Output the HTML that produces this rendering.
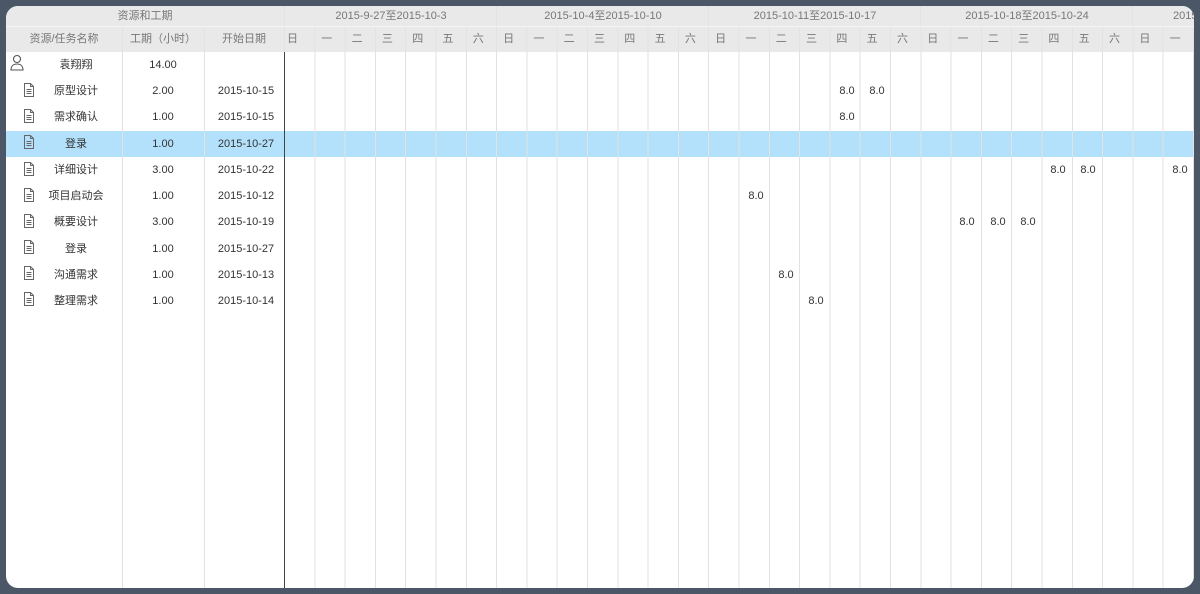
<!DOCTYPE html>
<html><head><meta charset="utf-8"><style>
*{margin:0;padding:0;box-sizing:border-box}
body{width:1200px;height:594px;background:#4b5667;overflow:hidden;font-family:"Liberation Sans","Noto Sans CJK SC",sans-serif;font-size:11px}
#f{position:absolute;left:6px;top:6px;width:1188px;height:582px;background:#fff;border-radius:12px;overflow:hidden}
.a{position:absolute}
.hd{position:absolute;left:0;top:0;width:1188px;height:46px;background:#e9e9e9}
.t{position:absolute;text-align:center;white-space:nowrap;color:#333;line-height:26px}
.h{color:#777;line-height:20px}
.vl{position:absolute;top:0;width:1px;height:582px;background:#e2e2e2}
#days span{flex:0 0 30.3px;padding-left:6px;line-height:26px}
</style></head><body>
<div id="f">
<div class="hd"></div>
<div class="a" style="left:0;top:125px;width:1188px;height:26px;background:#b3e0fb"></div>
<div class="a" style="left:279px;top:0;width:909px;height:582px;background:repeating-linear-gradient(to right,transparent 0 29.3px,#e2e2e2 29.3px 30.3px)"></div>
<div class="a" style="left:279px;top:0;width:909px;height:20px;background:#e9e9e9"></div>
<div class="vl" style="left:116px;top:20px"></div>
<div class="vl" style="left:198px;top:20px"></div>
<div class="vl" style="left:278px"></div>
<div class="vl" style="left:490px;height:20px"></div>
<div class="vl" style="left:702px;height:20px"></div>
<div class="vl" style="left:914px;height:20px"></div>
<div class="vl" style="left:1126px;height:20px"></div>
<div class="a" style="left:278px;top:46px;width:1px;height:536px;background:#444"></div>
<div class="a" style="left:0;top:20px;width:1188px;height:1px;background:#f4f4f4"></div>

<div class="t h" style="left:0;top:0;width:278px">资源和工期</div>
<div class="t h" style="left:279px;top:0;width:212px">2015-9-27至2015-10-3</div>
<div class="t h" style="left:491px;top:0;width:212px">2015-10-4至2015-10-10</div>
<div class="t h" style="left:703px;top:0;width:212px">2015-10-11至2015-10-17</div>
<div class="t h" style="left:915px;top:0;width:212px">2015-10-18至2015-10-24</div>
<div class="t h" style="left:1167px;top:0;width:100px;text-align:left">2015-10-25至2015-10-31</div>

<div class="t h" style="left:0;top:20px;width:116px;line-height:26px">资源/任务名称</div>
<div class="t h" style="left:116px;top:20px;width:82px;line-height:26px">工期（小时）</div>
<div class="t h" style="left:198px;top:20px;width:80px;line-height:26px">开始日期</div>
<div class="a" id="days" style="left:279px;top:20px;width:909px;height:26px;display:flex;color:#777">
<span style="padding-left:2px">日</span><span>一</span><span>二</span><span>三</span><span>四</span><span>五</span><span>六</span>
<span>日</span><span>一</span><span>二</span><span>三</span><span>四</span><span>五</span><span>六</span>
<span>日</span><span>一</span><span>二</span><span>三</span><span>四</span><span>五</span><span>六</span>
<span>日</span><span>一</span><span>二</span><span>三</span><span>四</span><span>五</span><span>六</span>
<span>日</span><span>一</span>
</div>

<svg class="a" style="left:3px;top:48px" width="16" height="18" viewBox="0 0 16 18" fill="none" stroke="#555" stroke-width="1.1"><circle cx="8" cy="5" r="3.5"/><path d="M2 16c0-4 2.5-6 6-6s6 2 6 6z"/></svg>
<div class="t" style="left:0;top:46px;width:140px">袁翔翔</div>
<div class="t" style="left:116px;top:46px;width:82px">14.00</div>

<svg width="0" height="0" style="position:absolute"><defs><g id="d"><path d="M1.5 0.5h6l3 3v10h-9z" fill="none" stroke="#666" stroke-width="1"/><path d="M7.5 0.5v3h3M3.5 6.5h5M3.5 8.5h5M3.5 10.5h5" stroke="#666" stroke-width="1" fill="none"/></g></defs></svg>
<svg class="a" style="left:17px;top:77px" width="12" height="15"><use href="#d"/></svg>
<svg class="a" style="left:17px;top:103px" width="12" height="15"><use href="#d"/></svg>
<svg class="a" style="left:17px;top:129px" width="12" height="15"><use href="#d"/></svg>
<svg class="a" style="left:17px;top:156px" width="12" height="15"><use href="#d"/></svg>
<svg class="a" style="left:17px;top:182px" width="12" height="15"><use href="#d"/></svg>
<svg class="a" style="left:17px;top:208px" width="12" height="15"><use href="#d"/></svg>
<svg class="a" style="left:17px;top:234px" width="12" height="15"><use href="#d"/></svg>
<svg class="a" style="left:17px;top:260px" width="12" height="15"><use href="#d"/></svg>
<svg class="a" style="left:17px;top:286px" width="12" height="15"><use href="#d"/></svg>

<div class="t" style="left:30px;top:72px;width:80px">原型设计</div>
<div class="t" style="left:30px;top:98px;width:80px">需求确认</div>
<div class="t" style="left:30px;top:125px;width:80px">登录</div>
<div class="t" style="left:30px;top:151px;width:80px">详细设计</div>
<div class="t" style="left:30px;top:177px;width:80px">项目启动会</div>
<div class="t" style="left:30px;top:203px;width:80px">概要设计</div>
<div class="t" style="left:30px;top:230px;width:80px">登录</div>
<div class="t" style="left:30px;top:256px;width:80px">沟通需求</div>
<div class="t" style="left:30px;top:282px;width:80px">整理需求</div>

<div class="t" style="left:116px;top:72px;width:82px">2.00</div>
<div class="t" style="left:116px;top:98px;width:82px">1.00</div>
<div class="t" style="left:116px;top:125px;width:82px">1.00</div>
<div class="t" style="left:116px;top:151px;width:82px">3.00</div>
<div class="t" style="left:116px;top:177px;width:82px">1.00</div>
<div class="t" style="left:116px;top:203px;width:82px">3.00</div>
<div class="t" style="left:116px;top:230px;width:82px">1.00</div>
<div class="t" style="left:116px;top:256px;width:82px">1.00</div>
<div class="t" style="left:116px;top:282px;width:82px">1.00</div>

<div class="t" style="left:200px;top:72px;width:80px">2015-10-15</div>
<div class="t" style="left:200px;top:98px;width:80px">2015-10-15</div>
<div class="t" style="left:200px;top:125px;width:80px">2015-10-27</div>
<div class="t" style="left:200px;top:151px;width:80px">2015-10-22</div>
<div class="t" style="left:200px;top:177px;width:80px">2015-10-12</div>
<div class="t" style="left:200px;top:203px;width:80px">2015-10-19</div>
<div class="t" style="left:200px;top:230px;width:80px">2015-10-27</div>
<div class="t" style="left:200px;top:256px;width:80px">2015-10-13</div>
<div class="t" style="left:200px;top:282px;width:80px">2015-10-14</div>

<div class="t" style="left:826px;top:72px;width:30px">8.0</div>
<div class="t" style="left:856px;top:72px;width:30px">8.0</div>
<div class="t" style="left:826px;top:98px;width:30px">8.0</div>
<div class="t" style="left:1037px;top:151px;width:30px">8.0</div>
<div class="t" style="left:1067px;top:151px;width:30px">8.0</div>
<div class="t" style="left:1159px;top:151px;width:30px">8.0</div>
<div class="t" style="left:735px;top:177px;width:30px">8.0</div>
<div class="t" style="left:946px;top:203px;width:30px">8.0</div>
<div class="t" style="left:977px;top:203px;width:30px">8.0</div>
<div class="t" style="left:1007px;top:203px;width:30px">8.0</div>
<div class="t" style="left:765px;top:256px;width:30px">8.0</div>
<div class="t" style="left:795px;top:282px;width:30px">8.0</div>
</div>
</body></html>
